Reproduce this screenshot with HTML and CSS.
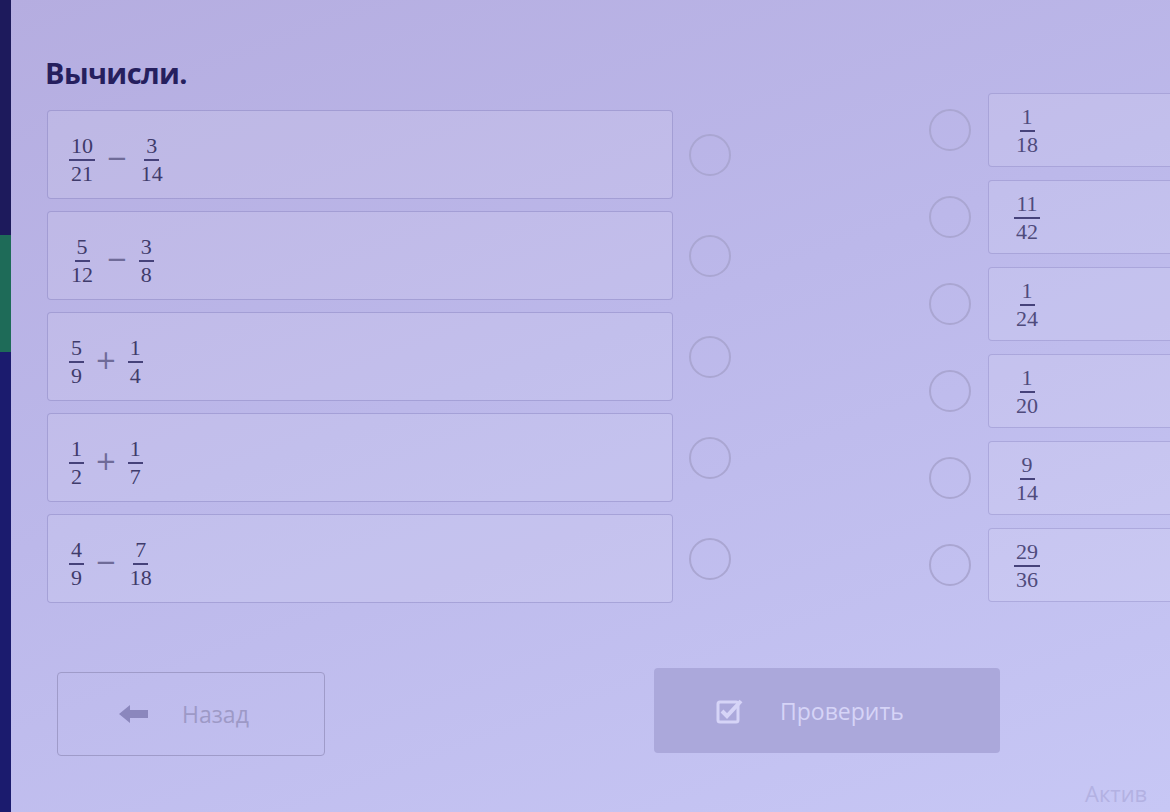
FILE: index.html
```html
<!DOCTYPE html>
<html lang="ru">
<head>
  <meta charset="UTF-8" />
  <meta name="viewport" content="width=device-width, initial-scale=1.0"/>
  <title>Вычисли</title>
  <link rel="stylesheet" href="styles.css">
</head>
<body>
  <div class="page">
    <div class="strip">
      <div class="strip-top"></div>
      <div class="strip-green"></div>
      <div class="strip-bottom"></div>
    </div>

    <main class="main">
      <h1>Вычисли.</h1>

      <div class="task">
        <div class="left-list">
          <div class="pair">
            <div class="expr">
              <span class="frac"><span>10</span><span>21</span></span>
              <span class="op">−</span>
              <span class="frac"><span>3</span><span>14</span></span>
            </div>
            <span class="dot-ring"></span>
          </div>
          <div class="pair">
            <div class="expr">
              <span class="frac"><span>5</span><span>12</span></span>
              <span class="op">−</span>
              <span class="frac"><span>3</span><span>8</span></span>
            </div>
            <span class="dot-ring"></span>
          </div>
          <div class="pair">
            <div class="expr">
              <span class="frac"><span>5</span><span>9</span></span>
              <span class="op">+</span>
              <span class="frac"><span>1</span><span>4</span></span>
            </div>
            <span class="dot-ring"></span>
          </div>
          <div class="pair">
            <div class="expr">
              <span class="frac"><span>1</span><span>2</span></span>
              <span class="op">+</span>
              <span class="frac"><span>1</span><span>7</span></span>
            </div>
            <span class="dot-ring"></span>
          </div>
          <div class="pair">
            <div class="expr">
              <span class="frac"><span>4</span><span>9</span></span>
              <span class="op">−</span>
              <span class="frac"><span>7</span><span>18</span></span>
            </div>
            <span class="dot-ring"></span>
          </div>
        </div>

        <div class="right-list">
          <div class="pair">
            <span class="dot-ring"></span>
            <div class="answer"><span class="frac"><span>1</span><span>18</span></span></div>
          </div>
          <div class="pair">
            <span class="dot-ring"></span>
            <div class="answer"><span class="frac"><span>11</span><span>42</span></span></div>
          </div>
          <div class="pair">
            <span class="dot-ring"></span>
            <div class="answer"><span class="frac"><span>1</span><span>24</span></span></div>
          </div>
          <div class="pair">
            <span class="dot-ring"></span>
            <div class="answer"><span class="frac"><span>1</span><span>20</span></span></div>
          </div>
          <div class="pair">
            <span class="dot-ring"></span>
            <div class="answer"><span class="frac"><span>9</span><span>14</span></span></div>
          </div>
          <div class="pair">
            <span class="dot-ring"></span>
            <div class="answer"><span class="frac"><span>29</span><span>36</span></span></div>
          </div>
        </div>
      </div>

      <div class="nav">
        <button class="btn-back">
          <svg width="32" height="20" viewBox="0 0 32 20">
            <path d="M1 10 L12 1 L12 6 L30 6 L30 14 L12 14 L12 19 Z" fill="#8b87bd"/>
          </svg>
          Назад
        </button>
        <button class="btn-check">
          <svg width="28" height="26" viewBox="0 0 28 26">
            <rect x="2" y="4" width="20" height="20" rx="2" fill="none" stroke="#d6d4f7" stroke-width="3"/>
            <path d="M6 13 L11 18 L25 3" fill="none" stroke="#d6d4f7" stroke-width="4"/>
          </svg>
          Проверить
        </button>
      </div>
    </main>

    <div class="watermark">Актив</div>
  </div>
</body>
</html>
```

FILE: styles.css
```css
body {
  margin: 0;
  overflow: hidden;
  font-family: "Open Sans", "Liberation Sans", sans-serif;
  background: linear-gradient(160deg, #b5ade0 0%, #bcb8ea 45%, #c7c7f5 100%);
  color: #2a2560;
}
.page {
  position: relative;
  display: flex;
  width: 1170px;
  height: 812px;
}
.strip {
  width: 11px;
  display: flex;
  flex-direction: column;
  flex-shrink: 0;
}
.strip-top {
  height: 235px;
  background-color: #1d1a5c;
}
.strip-green {
  height: 117px;
  background-color: #1e6b58;
}
.strip-bottom {
  flex: 1;
  background-color: #1b1b6e;
}
.main {
  flex: 1;
  padding: 56px 0 0 34px;
}
h1 {
  margin: 0;
  font-size: 29px;
  line-height: 34px;
  font-weight: bold;
  letter-spacing: -0.6px;
  color: #261f5e;
}
.task {
  display: flex;
  margin-top: 3px;
}
.left-list {
  display: flex;
  flex-direction: column;
  gap: 12px;
  padding-top: 17px;
  padding-left: 2px;
}
.right-list {
  display: flex;
  flex-direction: column;
  gap: 13px;
  margin-left: 198px;
}
.pair {
  display: flex;
  align-items: center;
  gap: 16px;
}
.right-list .pair {
  gap: 17px;
}
.expr {
  width: 626px;
  height: 89px;
  box-sizing: border-box;
  padding: 10px 0 0 21px;
  display: flex;
  align-items: center;
  gap: 11px;
  background-color: rgba(255, 255, 255, 0.1);
  border: 1px solid rgba(110, 102, 175, 0.35);
  border-radius: 4px;
}
.answer {
  width: 200px;
  height: 74px;
  box-sizing: border-box;
  padding: 2px 0 0 25px;
  display: flex;
  align-items: center;
  background-color: rgba(255, 255, 255, 0.1);
  border: 1px solid rgba(110, 102, 175, 0.3);
  border-radius: 4px;
}
.dot-ring {
  width: 42px;
  height: 42px;
  box-sizing: border-box;
  border: 2px solid #aaa6d2;
  border-radius: 50%;
  flex-shrink: 0;
}
.frac {
  display: inline-flex;
  flex-direction: column;
  align-items: center;
  font-family: "Liberation Serif", "DejaVu Serif", serif;
  font-size: 22px;
  line-height: 24px;
  color: #3f3b6b;
}
.frac span:first-child {
  border-bottom: 2px solid #46427a;
  padding: 0 2px 1px;
}
.frac span:last-child {
  padding: 1px 2px 0;
}
.answer .frac {
  color: #4f4b7c;
}
.op {
  font-family: "DejaVu Sans", sans-serif;
  font-size: 26px;
  color: #6f6b98;
  margin-top: -4px;
}
.nav {
  display: flex;
  align-items: flex-start;
  gap: 329px;
  margin-top: 65px;
  padding-left: 12px;
}
button {
  display: flex;
  align-items: center;
  font-family: "Open Sans", "Liberation Sans", sans-serif;
  font-size: 23px;
  border-radius: 4px;
  cursor: pointer;
}
.btn-back {
  width: 268px;
  height: 84px;
  margin-top: 4px;
  padding-left: 60px;
  gap: 32px;
  background: transparent;
  border: 1px solid #9f9bc9;
  color: #9d99c6;
}
.btn-check {
  width: 346px;
  height: 85px;
  padding-left: 62px;
  gap: 36px;
  background-color: #aba8db;
  border: none;
  color: #d6d4f7;
}
.watermark {
  position: absolute;
  left: 1085px;
  top: 778px;
  font-size: 22px;
  line-height: 30px;
  color: #b3b1e2;
  white-space: nowrap;
}
```
